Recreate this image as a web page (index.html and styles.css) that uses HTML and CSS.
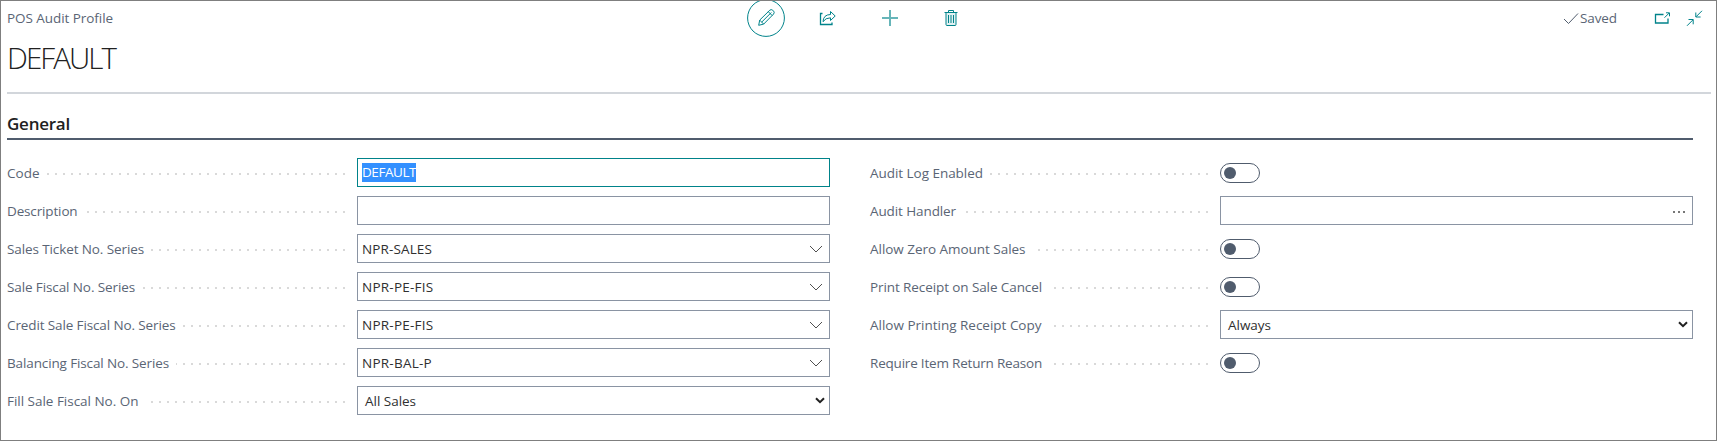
FILE: index.html
```html
<!DOCTYPE html>
<html lang="en">
<head>
<meta charset="utf-8">
<title>POS Audit Profile</title>
<link rel="stylesheet" href="styles.css">
</head>
<body>
<div class="page">
  <header class="topbar">
    <div class="caption"><span data-w="106">POS Audit Profile</span></div>
    <nav class="actions">
      <button class="action action-current" aria-label="Edit"><svg width="38" height="38" viewBox="0 0 38 38"><circle cx="19" cy="19" r="18.4"/><path d="M11.7 26.3l1-5.2L22.800 11.200q1.400-1.200 2.900 0l.9.9q1.200 1.500 0 2.900L16.700 25.100zM12.700 21.100l4 4M14.700 23.100l9.600-9.600M21.300 12.700l3.900 3.900"/></svg></button>
      <button class="action" aria-label="Share"><svg width="18" height="16" viewBox="0 0 18 16"><path class="firm" d="M3.500 3.500h-2v11H13v-2"/><path d="M4 11.700q.3-7 7.500-7.200V1.500l4.700 4.500-4.700 4.500V7.800Q6.500 7.800 4 11.700z"/></svg></button>
      <button class="action" aria-label="New"><svg width="16" height="16" viewBox="0 0 16 16"><path class="soft" d="M8 0v16M0 8h16"/></svg></button>
      <button class="action" aria-label="Delete"><svg width="14" height="16" viewBox="0 0 14 16"><path class="fill" d="M2 3h10v12H2z"/><path d="M.5 2.500h13M4.500 2.500v-2h5v2M2 2.500v12q0 1 1 1h8q1 0 1-1v-12M4.500 5v8M7 5v8M9.500 5v8"/></svg></button>
    </nav>
    <div class="status">
      <svg class="check" width="16" height="13" viewBox="0 0 16 13"><path d="M1 7l4.500 4.500L15 1.500"/></svg>
      <span class="saved" data-w="37">Saved</span>
      <svg class="popout" width="17" height="13" viewBox="0 0 17 13"><path class="firm" d="M9.500 2.500H1.500v8.500h12.500V6.500"/><path d="M10.500 5.700l4.700-4.700M12 .8h3.500v3.500"/></svg>
      <svg class="collapse" width="17" height="17" viewBox="0 0 17 17"><path d="M16 .8L10 6.800M9.800 2.500v4.500h4.800M1 15.800l6-6M2.500 9.500h4.700v4.800"/></svg>
    </div>
  </header>
  <h1 class="title"><span data-w="108">DEFAULT</span></h1>
  <main class="content">
    <h2 class="section"><span data-w="63">General</span></h2>
    <div class="columns">
      <div class="column">
        <div class="row"><label class="label"><span data-w="32.500">Code</span></label><div class="field field-focus"><mark class="selected" data-w="54">DEFAULT</mark></div></div>
        <div class="row"><label class="label"><span data-w="70.500">Description</span></label><div class="field"></div></div>
        <div class="row"><label class="label"><span data-w="137">Sales Ticket No. Series</span></label><div class="field"><span data-w="70">NPR-SALES</span><svg class="chevron" width="14" height="9" viewBox="0 0 14 9"><path d="M1 1l6 6 6-6"/></svg></div></div>
        <div class="row"><label class="label"><span data-w="128">Sale Fiscal No. Series</span></label><div class="field"><span data-w="71.500">NPR-PE-FIS</span><svg class="chevron" width="14" height="9" viewBox="0 0 14 9"><path d="M1 1l6 6 6-6"/></svg></div></div>
        <div class="row"><label class="label"><span data-w="168.500">Credit Sale Fiscal No. Series</span></label><div class="field"><span data-w="71.500">NPR-PE-FIS</span><svg class="chevron" width="14" height="9" viewBox="0 0 14 9"><path d="M1 1l6 6 6-6"/></svg></div></div>
        <div class="row"><label class="label"><span data-w="162">Balancing Fiscal No. Series</span></label><div class="field"><span data-w="70">NPR-BAL-P</span><svg class="chevron" width="14" height="9" viewBox="0 0 14 9"><path d="M1 1l6 6 6-6"/></svg></div></div>
        <div class="row"><label class="label"><span data-w="131.500">Fill Sale Fiscal No. On</span></label><div class="field field-select"><span data-w="51">All Sales</span><svg class="arrow" width="10" height="7" viewBox="0 0 10 7"><path d="M1 1.200l4 4 4-4"/></svg></div></div>
      </div>
      <div class="column">
        <div class="row"><label class="label"><span data-w="113">Audit Log Enabled</span></label><div class="toggle"></div></div>
        <div class="row"><label class="label"><span data-w="86">Audit Handler</span></label><div class="field"><svg class="more" width="12" height="2" viewBox="0 0 12 2"><path d="M0 0h2v2H0zM5 0h2v2H5zM10 0h2v2h-2z"/></svg></div></div>
        <div class="row"><label class="label"><span data-w="155.500">Allow Zero Amount Sales</span></label><div class="toggle"></div></div>
        <div class="row"><label class="label"><span data-w="172">Print Receipt on Sale Cancel</span></label><div class="toggle"></div></div>
        <div class="row"><label class="label"><span data-w="171.500">Allow Printing Receipt Copy</span></label><div class="field field-select"><span data-w="43">Always</span><svg class="arrow" width="10" height="7" viewBox="0 0 10 7"><path d="M1 1.200l4 4 4-4"/></svg></div></div>
        <div class="row"><label class="label"><span data-w="172">Require Item Return Reason</span></label><div class="toggle"></div></div>
      </div>
    </div>
  </main>
</div>
<script src="fit.js"></script>
</body>
</html>
```
FILE: styles.css
```css
* { box-sizing: border-box; }
body { margin: 0; background: #fff; font-family: "Open Sans", "Noto Sans", sans-serif; font-size: 13.5px; color: #303030; }
.page { width: 1717px; height: 441px; border: 1px solid #7f7f7f; overflow: hidden; padding-left: 6px; }
span, mark { white-space: nowrap; }
svg { display: block; fill: none; stroke: #00838a; stroke-width: 1; flex: none; }

.topbar { display: flex; align-items: center; height: 34px; }
.caption { width: 740px; color: #5a6575; }
.actions { display: flex; align-items: center; }
.action { display: flex; padding: 0; border: 0; background: none; margin-right: 45px; }
.action:nth-child(1) { margin-right: 34px; }
.action:nth-child(3) { margin-right: 46px; }
.firm { stroke-width: 1.300; }
.soft { stroke-width: 2; opacity: .6; }
.fill { fill: #e0f1f2; stroke: none; }
.status { display: flex; align-items: center; margin-left: auto; padding-right: 13px; color: #5a6575; }
.check { stroke: #505c6d; margin-right: 1px; }
.popout { margin-left: 37px; }
.collapse { margin-left: 15px; }

.title { margin: 0 5px 0 0; height: 59px; border-bottom: 2px solid #d2d6db; font-size: 29.500px; font-weight: 300; line-height: 46px; color: #212121; }
.content { width: 1686px; }
.section { margin: 0; height: 46px; border-bottom: 2px solid #505c6d; padding-top: 18px; font-size: 17px; font-weight: 600; line-height: 24px; color: #212121; }
.columns { display: grid; grid-template-columns: 823px 823px; gap: 40px; padding-top: 18px; }
.column { display: flex; flex-direction: column; gap: 9px; }
.row { display: flex; align-items: center; height: 29px; }
.label { display: flex; align-items: center; gap: 7px; width: 338px; margin-right: 12px; height: 29px; color: #5a6575; }
.label::after { content: ""; flex: 1; height: 2px; margin-top: 3px; background: repeating-linear-gradient(to left, #d9d9d9 0 2px, transparent 2px 8px); }
.field { display: flex; align-items: center; width: 473px; height: 29px; border: 1px solid #8a94a3; padding: 0 6px 0 4px; }
.field-focus { border-color: #00838a; }
.selected { background: #3390ff; color: #fff; line-height: 19px; }
.field-select { padding: 0 4px 0 7px; }
.chevron { margin: 2px 0 0 auto; stroke: #505050; }
.arrow { margin-left: auto; stroke: #212121; stroke-width: 2; }
.more { margin: 2px 1px 0 auto; fill: #777; stroke: none; }
.toggle { width: 40px; height: 20px; border: 1px solid #505c6d; border-radius: 10px; padding: 3px; }
.toggle::before { content: ""; display: block; width: 12px; height: 12px; border-radius: 50%; background: #505c6d; }
```
FILE: fit.js
```js
// Tracks each text so that it fills its nominal width.
document.querySelectorAll('[data-w]').forEach(function (el) {
  var natural = el.getBoundingClientRect().width;
  var spacing = (parseFloat(el.dataset.w) - natural) / el.textContent.length;
  el.style.letterSpacing = spacing + 'px';
});
```
